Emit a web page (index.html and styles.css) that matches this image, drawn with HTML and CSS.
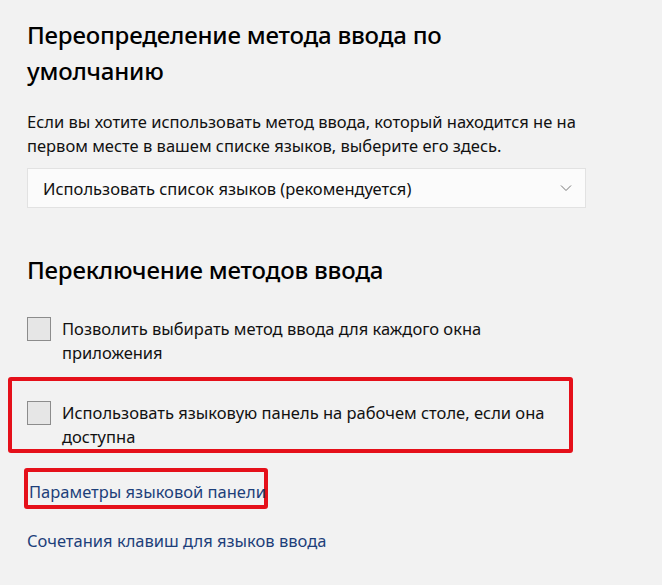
FILE: index.html
```html
<!DOCTYPE html>
<html lang="ru">
<head>
<meta charset="utf-8">
<link rel="stylesheet" href="styles.css">
</head>
<body>
<main class="page">
  <h2 class="title first">Переопределение метода ввода по умолчанию</h2>
  <p class="desc">Если вы хотите использовать метод ввода, который находится не на первом месте в вашем списке языков, выберите его здесь.</p>
  <div class="select">
    <span class="select-text">Использовать список языков (рекомендуется)</span>
    <svg class="chev" width="12" height="8" viewBox="0 0 12 8"><path d="M1 1.5 L6 6.5 L11 1.5" fill="none" stroke="#777" stroke-width="1"/></svg>
  </div>

  <h2 class="title second">Переключение методов ввода</h2>
  <label class="check">
    <span class="box"></span>
    <span class="check-text">Позволить выбирать метод ввода для каждого окна приложения</span>
  </label>
  <div class="mark mark-row">
    <label class="check">
      <span class="box"></span>
      <span class="check-text">Использовать языковую панель на рабочем столе, если она доступна</span>
    </label>
  </div>
  <div class="mark mark-link">
    <a class="link" href="#">Параметры языковой панели</a>
  </div>
  <a class="link link2" href="#">Сочетания клавиш для языков ввода</a>
</main>
</body>
</html>
```

FILE: styles.css
```css
html, body {
  margin: 0;
  padding: 0;
  background: #f2f2f2;
}
body {
  font-family: "Noto Sans", "Open Sans", sans-serif;
  color: #111;
}
.page {
  padding: 17px 0 0 27px;
  width: 600px;
}
.title {
  font-size: 24px;
  font-weight: 500;
  line-height: 36px;
  margin: 0;
  color: #000;
  letter-spacing: -0.2px;
}
.title.first {
  width: 450px;
}
.desc {
  margin: 21px 0 0;
  font-size: 16.5px;
  line-height: 24px;
  width: 570px;
}
.select {
  margin-top: 10px;
  height: 40px;
  width: 559px;
  background: #fbfbfb;
  border: 1px solid #e2e2e2;
  display: flex;
  align-items: center;
  justify-content: space-between;
  padding: 0 13px 0 15px;
  box-sizing: border-box;
  font-size: 16.5px;
}
.chev { display: block; }
.title.second {
  margin-top: 44px;
}
.check {
  display: flex;
  align-items: flex-start;
  gap: 11px;
  font-size: 16.5px;
  line-height: 24px;
}
.page > .check {
  margin-top: 29px;
  width: 480px;
}
.box {
  flex: none;
  width: 22px;
  height: 22px;
  border: 1px solid #8c8c8c;
  background: #e6e6e6;
}
.mark {
  border: 4px solid #e5101a;
  border-radius: 3px;
  box-sizing: border-box;
}
.mark-row {
  margin: 12px 0 0 -19px;
  width: 565px;
  padding: 20px 6px 0 15px;
}
.mark-row .check {
  width: 530px;
}
.mark-link {
  margin: 15px 0 0 -3px;
  width: 244px;
  padding: 8px 0 1px 1px;
}
.link {
  color: #1d3f7a;
  text-decoration: none;
  font-size: 16.5px;
  line-height: 24px;
  display: block;
  white-space: nowrap;
}
.link2 {
  margin-top: 20px;
}
```
